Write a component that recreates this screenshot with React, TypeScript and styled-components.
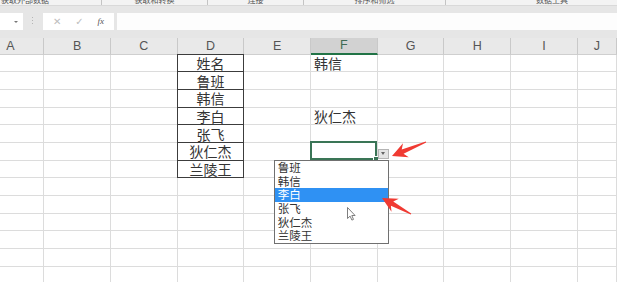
import styled, { createGlobalStyle } from 'styled-components';

const GlobalStyle = createGlobalStyle`
  html, body {
    margin: 0;
    padding: 0;
    background: #ffffff;
    overflow: hidden;
  }
  body {
    font-family: 'Liberation Sans', 'Noto Sans CJK SC', sans-serif;
  }
`;

const COLUMNS = ['A', 'B', 'C', 'D', 'E', 'F', 'G', 'H', 'I', 'J'];
const ROW_COUNT = 13;
const ACTIVE_COLUMN = 'F';
const ACTIVE_ROW = 6;

const nameList = ['姓名', '鲁班', '韩信', '李白', '张飞', '狄仁杰', '兰陵王'];
const choices = ['鲁班', '韩信', '李白', '张飞', '狄仁杰', '兰陵王'];
const highlighted = '李白';

const cellValues: Record<string, string> = {
  F1: '韩信',
  F4: '狄仁杰',
};

const ribbonGroups = [
  { label: '获取外部数据', width: 152 },
  { label: '获取和转换', width: 105 },
  { label: '连接', width: 95 },
  { label: '排序和筛选', width: 141 },
  { label: '数据工具', width: 212 },
];

const Screen = styled.div`
  position: relative;
  width: 617px;
  height: 282px;
  overflow: hidden;
  display: flex;
  flex-direction: column;
  background: #ffffff;
`;

const RibbonStrip = styled.div`
  height: 4.5px;
  flex-shrink: 0;
  overflow: hidden;
  display: flex;
  background: #f3f3f3;
  border-bottom: 1px solid #d9d9d9;

  & > :first-child {
    margin-left: -51px;
  }
`;

const RibbonGroup = styled.div<{ $width: number }>`
  width: ${({ $width }) => $width}px;
  flex-shrink: 0;
  border-right: 1px solid #c4c4c4;
  text-align: center;
  font-family: 'Noto Sans CJK SC', sans-serif;
  font-size: 8px;
  line-height: 8px;
  margin-top: -4px;
  color: #555555;
`;

const FormulaArea = styled.div`
  height: 32px;
  flex-shrink: 0;
  display: flex;
  align-items: center;
  background: #e6e6e6;
`;

const NameBox = styled.div`
  width: 23px;
  height: 16.5px;
  background: #ffffff;
  display: flex;
  align-items: center;
  justify-content: flex-end;
  padding-right: 5px;
  box-sizing: border-box;
`;

const TinyCaret = styled.span`
  width: 0;
  height: 0;
  border-left: 2px solid transparent;
  border-right: 2px solid transparent;
  border-top: 2.5px solid #777777;
`;

const Grip = styled.div`
  width: 1px;
  height: 9px;
  margin-left: 9px;
  background-image: linear-gradient(#b5b5b5 50%, transparent 50%);
  background-size: 1px 3px;
`;

const FuncBox = styled.div`
  width: 71px;
  height: 16.5px;
  margin-left: 10px;
  background: #ffffff;
  display: flex;
  align-items: center;
  justify-content: space-around;
  padding: 0 3px;
  box-sizing: border-box;
`;

const FuncIcon = styled.span<{ $muted?: boolean }>`
  font-size: ${({ $muted }) => ($muted ? '10px' : '9px')};
  line-height: 1;
  color: ${({ $muted }) => ($muted ? '#bdbdbd' : '#555555')};
  font-family: ${({ $muted }) =>
    $muted ? "'DejaVu Sans', sans-serif" : "'Liberation Serif', serif"};
  font-style: ${({ $muted }) => ($muted ? 'normal' : 'italic')};
`;

const FormulaInput = styled.div`
  flex: 1;
  height: 16.5px;
  margin-left: 3px;
  background: #fdfdfd;
`;

const GapBand = styled.div`
  height: 0.5px;
  background: #e6e6e6;
`;

const Sheet = styled.div`
  display: grid;
  grid-template-columns: repeat(9, 66.7px) 1fr;
  grid-template-rows: 17px;
  grid-auto-rows: 17.7px;
  flex: 1;
  margin-left: -22.4px;
`;

const HeaderCell = styled.div<{ $active: boolean }>`
  display: flex;
  align-items: center;
  justify-content: center;
  background: ${({ $active }) => ($active ? '#d2d2d2' : '#e9e9e9')};
  border-right: 1px solid #c9c9c9;
  border-bottom: ${({ $active }) => ($active ? '2px solid #217346' : '1px solid #cfcfcf')};
  box-sizing: border-box;
  font-size: 12.5px;
  color: ${({ $active }) => ($active ? '#3f6b54' : '#555555')};
`;

const Cell = styled.div<{ $boxed?: boolean; $boxTop?: boolean; $center?: boolean }>`
  position: relative;
  display: flex;
  align-items: center;
  justify-content: ${({ $center }) => ($center ? 'center' : 'flex-start')};
  padding-left: ${({ $center }) => ($center ? '0' : '3px')};
  box-sizing: border-box;
  border-right: 1px solid ${({ $boxed }) => ($boxed ? '#3c3c3c' : '#dcdcdc')};
  border-bottom: 1px solid ${({ $boxed }) => ($boxed ? '#3c3c3c' : '#dcdcdc')};
  box-shadow: ${({ $boxed, $boxTop }) =>
    $boxed
      ? $boxTop
        ? '-1px 0 0 #3c3c3c, 0 -1px 0 #3c3c3c, -1px -1px 0 #3c3c3c'
        : '-1px 0 0 #3c3c3c'
      : 'none'};
  font-family: 'Noto Sans CJK SC', sans-serif;
  font-size: 14px;
  line-height: 16px;
  color: #333333;
  white-space: nowrap;
`;

const ActiveCell = styled(Cell)`
  z-index: 5;
`;

const SelectionFrame = styled.div`
  position: absolute;
  top: -1.5px;
  left: -1.5px;
  right: -0.5px;
  bottom: -0.5px;
  border: 2px solid #3a7556;
  pointer-events: none;
`;

const FillHandle = styled.div`
  position: absolute;
  right: -2.5px;
  bottom: -2.5px;
  width: 4px;
  height: 4px;
  background: #3a7556;
  border: 1px solid #ffffff;
`;

const DropButton = styled.div`
  position: absolute;
  right: -12px;
  bottom: 1px;
  width: 11px;
  height: 10px;
  box-sizing: border-box;
  background: #e4e4e4;
  border: 1px solid #b4b4b4;
  display: flex;
  align-items: center;
  justify-content: center;

  &::after {
    content: '';
    border-left: 2.5px solid transparent;
    border-right: 2.5px solid transparent;
    border-top: 3px solid #666666;
  }
`;

const DropList = styled.ul`
  position: absolute;
  top: calc(100% + 0.5px);
  right: -12px;
  width: 115px;
  margin: 0;
  padding: 0;
  list-style: none;
  background: #ffffff;
  border: 1px solid #707070;
  box-sizing: border-box;
`;

const DropItem = styled.li<{ $active: boolean }>`
  height: 13.6px;
  line-height: 13.6px;
  padding-left: 3px;
  font-family: 'Noto Sans CJK SC', sans-serif;
  font-size: 11.5px;
  color: ${({ $active }) => ($active ? '#ffffff' : '#333333')};
  background: ${({ $active }) => ($active ? '#2f91f3' : 'transparent')};
`;

const Annotations = styled.svg`
  position: absolute;
  top: 0;
  left: 0;
  pointer-events: none;
  z-index: 10;
`;

type ArrowProps = { tipX: number; tipY: number; tailX: number; tailY: number };

const RedArrow = ({ tipX, tipY, tailX, tailY }: ArrowProps) => {
  const dx = tailX - tipX;
  const dy = tailY - tipY;
  const len = Math.hypot(dx, dy);
  const angle = (Math.atan2(dy, dx) * 180) / Math.PI;
  const pts = `0,0 15,-7.5 11.5,-2.4 ${len},-0.5 ${len},0.5 11.5,2.4 15,7.5`;
  return (
    <g transform={`translate(${tipX} ${tipY}) rotate(${angle})`}>
      <polygon points={pts} fill="#f03a32" />
    </g>
  );
};

const Pointer = () => (
  <g transform="translate(347.5 207.5)">
    <path
      d="M0 0 L0 11 L2.6 8.6 L4.4 12.6 L6 11.9 L4.3 8 L7.6 8 Z"
      fill="#ffffff"
      stroke="#6f6f6f"
      strokeWidth="0.9"
      strokeLinejoin="round"
    />
  </g>
);

export default function App() {
  const rows = Array.from({ length: ROW_COUNT }, (_, i) => i + 1);

  return (
    <>
      <GlobalStyle />
      <Screen>
        <RibbonStrip>
          {ribbonGroups.map((group) => (
            <RibbonGroup key={group.label} $width={group.width}>
              {group.label}
            </RibbonGroup>
          ))}
        </RibbonStrip>
        <FormulaArea>
          <NameBox>
            <TinyCaret />
          </NameBox>
          <Grip />
          <FuncBox>
            <FuncIcon $muted>✕</FuncIcon>
            <FuncIcon $muted>✓</FuncIcon>
            <FuncIcon>fx</FuncIcon>
          </FuncBox>
          <FormulaInput />
        </FormulaArea>
        <GapBand />
        <Sheet>
          {COLUMNS.map((col) => (
            <HeaderCell key={col} $active={col === ACTIVE_COLUMN}>
              {col}
            </HeaderCell>
          ))}
          {rows.map((row) =>
            COLUMNS.map((col) => {
              const key = `${col}${row}`;
              if (col === ACTIVE_COLUMN && row === ACTIVE_ROW) {
                return (
                  <ActiveCell key={key}>
                    <SelectionFrame />
                    <FillHandle />
                    <DropButton />
                    <DropList>
                      {choices.map((choice) => (
                        <DropItem key={choice} $active={choice === highlighted}>
                          {choice}
                        </DropItem>
                      ))}
                    </DropList>
                  </ActiveCell>
                );
              }
              if (col === 'D' && row <= nameList.length) {
                return (
                  <Cell key={key} $boxed $boxTop={row === 1} $center>
                    {nameList[row - 1]}
                  </Cell>
                );
              }
              return <Cell key={key}>{cellValues[key] ?? ''}</Cell>;
            }),
          )}
        </Sheet>
        <Annotations width="617" height="282" viewBox="0 0 617 282">
          <RedArrow tipX={392} tipY={156} tailX={426} tailY={142} />
          <RedArrow tipX={382} tipY={198} tailX={411} tailY={214} />
          <Pointer />
        </Annotations>
      </Screen>
    </>
  );
}
